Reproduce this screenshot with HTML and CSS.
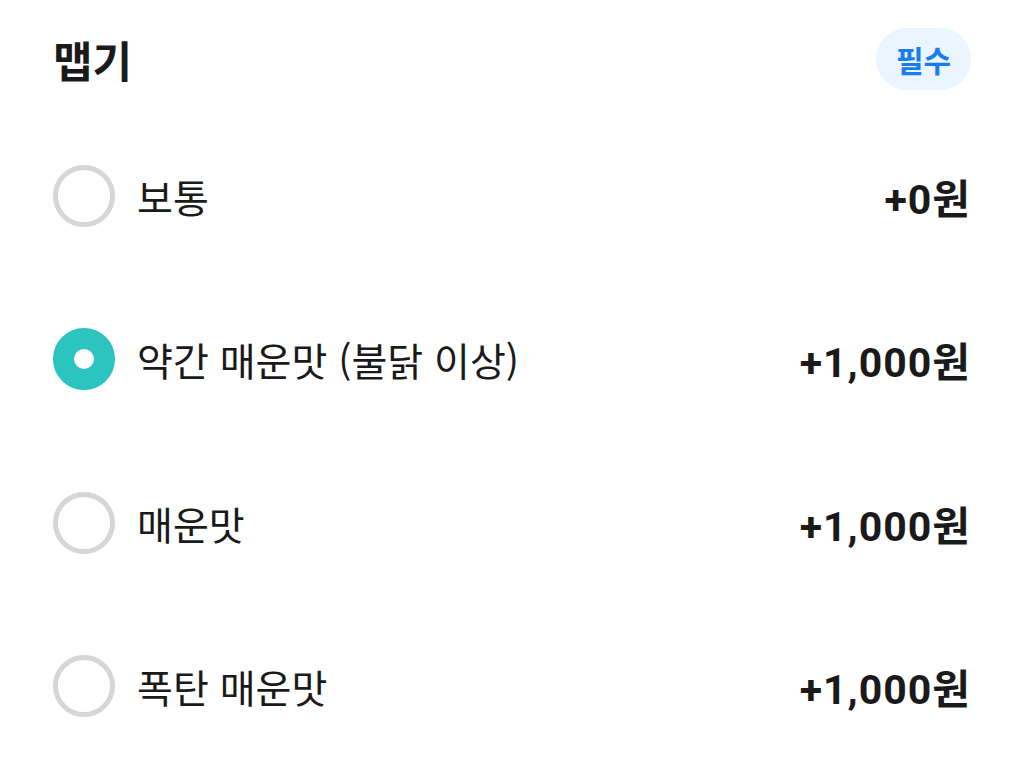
FILE: index.html
```html
<!DOCTYPE html>
<html lang="ko">
<head>
    <meta charset="UTF-8">
    <title>맵기 옵션</title>
    <link rel="stylesheet" href="styles.css">
</head>
<body>
    <div class="option-group">
        <div class="group-header">
            <h2 class="group-title">맵기</h2>
            <span class="badge">필수</span>
        </div>

        <!-- Options -->
        <div class="option-row">
            <span class="radio"></span>
            <span class="option-label">보통</span>
            <span class="option-price">+0원</span>
        </div>
        <div class="option-row">
            <span class="radio checked"></span>
            <span class="option-label">약간 매운맛 (불닭 이상)</span>
            <span class="option-price">+1,000원</span>
        </div>
        <div class="option-row">
            <span class="radio"></span>
            <span class="option-label">매운맛</span>
            <span class="option-price">+1,000원</span>
        </div>
        <div class="option-row">
            <span class="radio"></span>
            <span class="option-label">폭탄 매운맛</span>
            <span class="option-price">+1,000원</span>
        </div>
    </div>
</body>
</html>
```

FILE: styles.css
```css
body {
    margin: 0;
    background-color: #fff;
    font-family: Roboto, "Noto Sans CJK KR", sans-serif;
    color: #1a1a1a;
}
.option-group {
    padding: 28px 53px 0 53px;
}
.group-header {
    display: flex;
    align-items: center;
    justify-content: space-between;
    height: 62px;
    margin-bottom: 24px;
}
.group-title {
    margin: 0;
    font-size: 43px;
    font-weight: 700;
    font-family: "Noto Sans CJK KR", sans-serif;
    color: #1a1a1a;
}
.badge {
    display: flex;
    align-items: center;
    justify-content: center;
    width: 95px;
    height: 62px;
    border-radius: 31px;
    background-color: #eaf5ff;
    color: #1b7cf0;
    font-size: 30px;
    font-weight: 700;
    font-family: "Noto Sans CJK KR", sans-serif;
}
.option-row {
    display: flex;
    align-items: center;
    height: 163.5px;
}
.radio {
    box-sizing: border-box;
    width: 62px;
    height: 62px;
    border-radius: 50%;
    border: 5px solid #d6d6d6;
    margin-right: 22px;
    flex-shrink: 0;
}
.radio.checked {
    border: 21px solid #2bc4be;
    background-color: #fff;
}
.option-label {
    flex: 1;
    font-size: 39px;
    font-family: "Noto Sans CJK KR", sans-serif;
    color: #1a1a1a;
}
.option-price {
    font-size: 41px;
    font-weight: 700;
    letter-spacing: 1px;
    color: #1a1a1a;
}
```
